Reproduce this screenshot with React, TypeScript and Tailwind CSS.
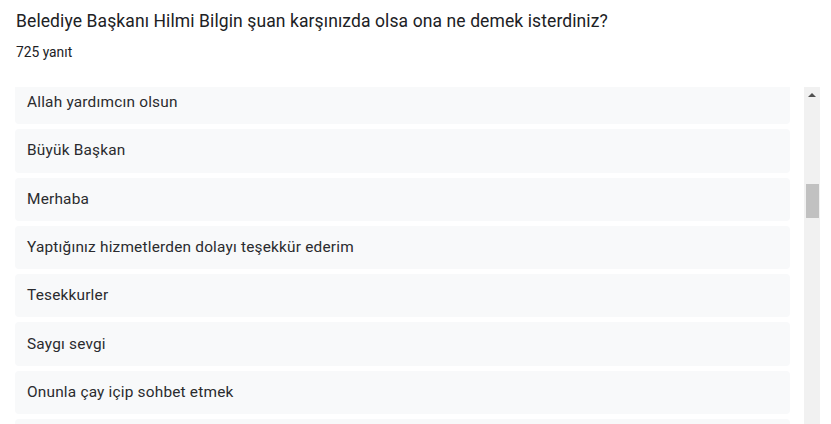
import { useEffect, useRef } from 'react';

const ANSWERS = [
  'Allah yardımcın olsun',
  'Büyük Başkan',
  'Merhaba',
  'Yaptığınız hizmetlerden dolayı teşekkür ederim',
  'Tesekkurler',
  'Saygı sevgi',
  'Onunla çay içip sohbet etmek',
  'Başarılar dilerim',
  'Teşekkürler',
];

export default function App() {
  const listRef = useRef<HTMLDivElement>(null);

  useEffect(() => {
    if (listRef.current) listRef.current.scrollTop = 6;
  }, []);

  return (
    <div className="h-[424px] w-[831px] overflow-hidden bg-white font-['Roboto',sans-serif] text-[#202124]">
      {/* Question header */}
      <div className="pl-4 pt-[9px]">
        <h1 className="text-[17.5px] leading-6 tracking-[0.1px]">
          Belediye Başkanı Hilmi Bilgin şuan karşınızda olsa ona ne demek isterdiniz?
        </h1>
        <p className="mt-[11px] text-[13.8px] leading-4">725 yanıt</p>
      </div>

      {/* Answers */}
      <div className="mt-[27px] flex h-[337px] pl-[15px]">
        <div ref={listRef} className="w-[775px] overflow-hidden">
          <div className="flex flex-col gap-[5px]">
            {ANSWERS.map((a) => (
              <div
                key={a}
                className="flex h-[43.3px] shrink-0 items-center rounded bg-[#f8f9fa] px-3 text-[15.4px] tracking-[0.2px] text-[#2a2b2e]"
              >
                {a}
              </div>
            ))}
          </div>
        </div>

        {/* Scrollbar */}
        <div className="ml-[14px] flex w-4 flex-col items-center bg-[#f1f1f1]">
          <div className="flex h-4 w-full items-center justify-center">
            <div className="h-0 w-0 border-x-[4px] border-b-[4px] border-x-transparent border-b-[#505050]" />
          </div>
          <div className="mt-[81px] h-[34px] w-[13px] bg-[#c1c1c1]" />
        </div>
      </div>
    </div>
  );
}
